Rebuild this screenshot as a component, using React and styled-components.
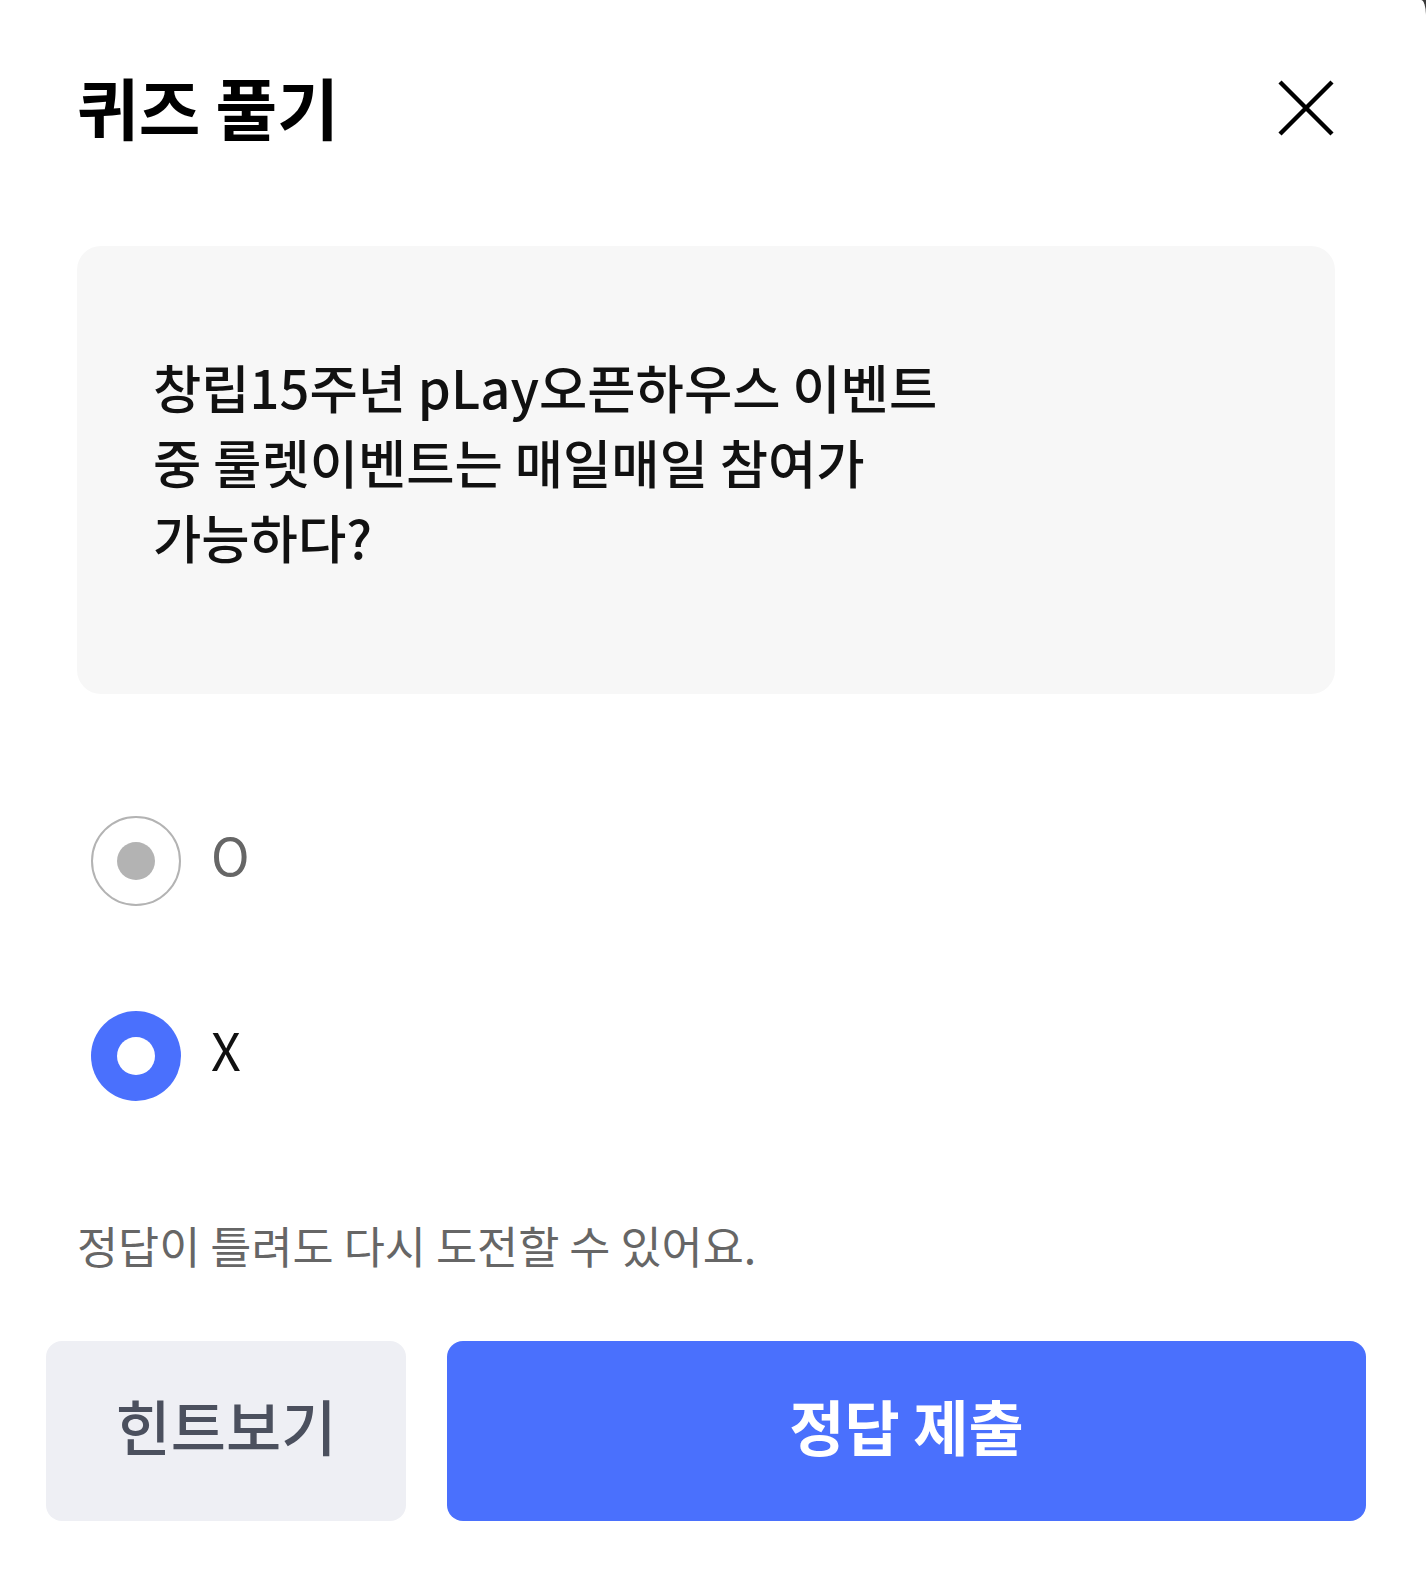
import { useState } from "react";
import styled, { createGlobalStyle } from "styled-components";

const GlobalStyle = createGlobalStyle`
  html, body {
    margin: 0;
    padding: 0;
    background: #3a3a3a;
  }
  body {
    font-family: "Noto Sans CJK KR", "Noto Sans", sans-serif;
  }
  * {
    box-sizing: border-box;
  }
`;

const options = [
  { id: "o", label: "O" },
  { id: "x", label: "X" },
];

function CloseIcon() {
  return (
    <svg width="56" height="56" viewBox="0 0 56 56" fill="none">
      <path d="M2 2 L54 54 M54 2 L2 54" stroke="#000" strokeWidth="4.4" strokeLinecap="butt" />
    </svg>
  );
}

function App() {
  const [answer, setAnswer] = useState("x");

  return (
    <>
      <GlobalStyle />
      <Sheet>
        <Content>
          <Header>
            <Title>퀴즈 풀기</Title>
            <CloseButton aria-label="닫기">
              <CloseIcon />
            </CloseButton>
          </Header>

          <QuestionCard>
            <Question>
              창립15주년 pLay오픈하우스 이벤트
              <br />
              중 룰렛이벤트는 매일매일 참여가
              <br />
              가능하다?
            </Question>
          </QuestionCard>

          <OptionList>
            {options.map((opt) => (
              <OptionRow key={opt.id} onClick={() => setAnswer(opt.id)}>
                <Radio $checked={answer === opt.id} />
                <OptionLabel $checked={answer === opt.id}>{opt.label}</OptionLabel>
              </OptionRow>
            ))}
          </OptionList>

          <Notice>정답이 틀려도 다시 도전할 수 있어요.</Notice>
        </Content>

        <Footer>
          <HintButton>힌트보기</HintButton>
          <SubmitButton>정답 제출</SubmitButton>
        </Footer>
      </Sheet>
    </>
  );
}

const Sheet = styled.div`
  background: #fff;
  min-height: 1578px;
  border-top-right-radius: 5px 15px;
  padding-top: 58px;
  padding-bottom: 57px;
  display: flex;
  flex-direction: column;
`;

const Content = styled.div`
  padding: 0 91px 0 77px;
`;

const Header = styled.div`
  height: 100px;
  display: flex;
  align-items: center;
  justify-content: space-between;
`;

const Title = styled.h1`
  margin: -6px 0 0;
  font-size: 67px;
  font-weight: 700;
  color: #000;
  line-height: 1;
`;

const CloseButton = styled.button`
  border: 0;
  background: none;
  padding: 0;
  margin-right: 1px;
  display: flex;
  cursor: pointer;
`;

const QuestionCard = styled.div`
  margin-top: 88px;
  background: #f7f7f7;
  border-radius: 24px;
  padding: 103px 76px 120px;
`;

const Question = styled.p`
  margin: 0;
  font-size: 52.5px;
  line-height: 75px;
  font-weight: 500;
  color: #111;
`;

const OptionList = styled.div`
  margin-top: 122px;
  display: flex;
  flex-direction: column;
  gap: 105px;
`;

const OptionRow = styled.label`
  height: 90px;
  display: flex;
  align-items: center;
  gap: 30px;
  padding-left: 14px;
  cursor: pointer;
`;

const Radio = styled.span`
  width: 90px;
  height: 90px;
  border-radius: 50%;
  flex-shrink: 0;
  display: flex;
  align-items: center;
  justify-content: center;
  background: ${(p) => (p.$checked ? "#4a70fd" : "#fff")};
  border: ${(p) => (p.$checked ? "none" : "2.5px solid #b3b3b3")};

  &::after {
    content: "";
    width: 38px;
    height: 38px;
    border-radius: 50%;
    background: ${(p) => (p.$checked ? "#fff" : "#b3b3b3")};
  }
`;

const OptionLabel = styled.span`
  font-size: 52px;
  line-height: 1;
  padding-bottom: 15px;
  color: ${(p) => (p.$checked ? "#111" : "#666")};
`;

const Notice = styled.p`
  margin: 114px 0 0;
  font-size: 44.7px;
  line-height: 60px;
  color: #666;
`;

const Footer = styled.div`
  margin-top: 66px;
  padding: 0 60px 0 46px;
  display: flex;
  gap: 41px;
`;

const BaseButton = styled.button`
  height: 180px;
  border: 0;
  border-radius: 16px;
  font-family: "Noto Sans CJK KR", "Noto Sans", sans-serif;
  font-size: 60px;
  font-weight: 700;
  cursor: pointer;
  padding: 0 0 14px;
`;

const HintButton = styled(BaseButton)`
  width: 360px;
  flex-shrink: 0;
  background: #eeeff4;
  color: #4b505e;
  font-weight: 500;
`;

const SubmitButton = styled(BaseButton)`
  flex: 1;
  background: #4a70fd;
  color: #fff;
`;

export default App;
